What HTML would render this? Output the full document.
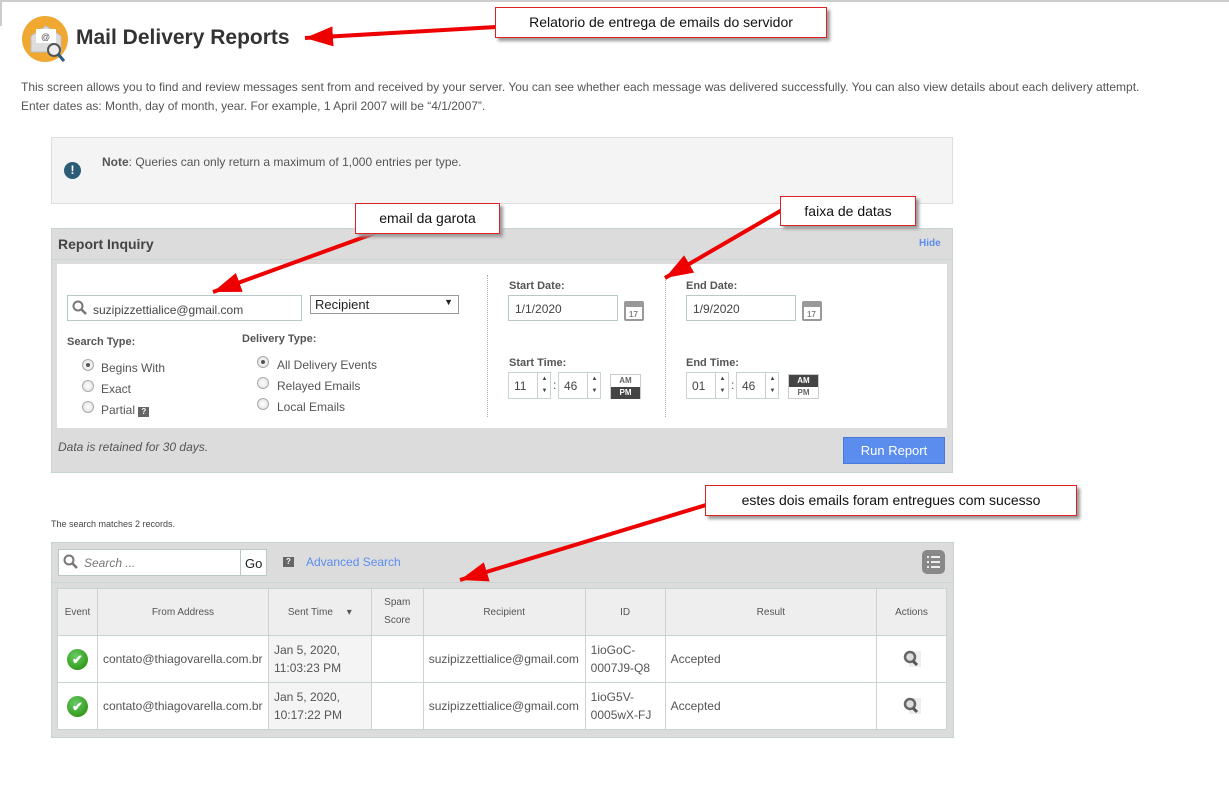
<!DOCTYPE html>
<html><head><meta charset="utf-8"><style>
*{box-sizing:border-box;margin:0;padding:0}
body{width:1229px;height:806px;background:#fff;font-family:"Liberation Sans",Arial,sans-serif;position:relative;overflow:hidden;color:#333}
.a{position:absolute}
.t12{font-size:12px;color:#555}
.lbl{font-size:11px;font-weight:bold;color:#555}
.inp{position:absolute;background:#fff;border:1px solid #b8c8c8;font-size:12px;color:#444}
.radio{position:absolute;width:12px;height:12px;border-radius:50%;border:1px solid #aaa;background:radial-gradient(#fff,#ddd)}
.radio.on::after{content:"";position:absolute;left:3px;top:3px;width:4px;height:4px;border-radius:50%;background:#555}
.rl{position:absolute;font-size:12px;color:#555}
.ann{position:absolute;background:#fff;border:1px solid #d22;box-shadow:3px 3px 3px #999;font-size:14px;color:#111;text-align:center}
table{border-collapse:collapse;position:absolute;left:57px;top:588px;width:890px;font-size:12px}
td,th{border:1px solid #c8d4d4;color:#555}
th{background:#eee;font-size:10px;font-weight:normal;height:47px}
td{height:47px;background:#fff;padding:0 5px}
.spin{position:absolute;border:1px solid #c8d4d4;background:#fff;font-size:12px;color:#444}
.ampm{position:absolute;width:31px;height:25px;border:1px solid #ccc;font-size:8px;font-weight:bold;text-align:center;line-height:12px}
</style></head><body>
<div class="a" style="left:0;top:0;width:1229px;height:2px;background:#ccc"></div>
<div class="a" style="left:0;top:0;width:2px;height:26px;background:#ccc"></div>
<div class="a" style="left:22px;top:16px;width:46px;height:46px;border-radius:50%;background:#f0a830"></div>
<svg class="a" style="left:22px;top:16px" width="50" height="50"><path d="M9 20 L24 10 L39 20 L39 36 L9 36Z" fill="#ddd" stroke="#bbb"/><rect x="14" y="13" width="20" height="14" fill="#fff"/><text x="19" y="24" font-size="9" fill="#555" font-family="Liberation Sans">@</text><circle cx="32" cy="34" r="6" fill="#eee" stroke="#555" stroke-width="2"/><line x1="36" y1="38" x2="42" y2="45" stroke="#2a5a80" stroke-width="3"/></svg>
<div class="a" style="left:76px;top:26px;font-size:21px;font-weight:bold;color:#333">Mail Delivery Reports</div>
<div class="a t12" style="left:21px;top:80px">This screen allows you to find and review messages sent from and received by your server. You can see whether each message was delivered successfully. You can also view details about each delivery attempt.</div>
<div class="a t12" style="left:21px;top:99px">Enter dates as: Month, day of month, year. For example, 1 April 2007 will be “4/1/2007”.</div>

<div class="a" style="left:51px;top:137px;width:902px;height:67px;background:#f4f4f4;border:1px solid #ddd"></div>
<div class="a" style="left:64px;top:162px;width:17px;height:17px;border-radius:50%;background:#2c5d78;color:#fff;font-size:12px;font-weight:bold;text-align:center;line-height:17px">!</div>
<div class="a t12" style="left:102px;top:155px"><b>Note</b>: Queries can only return a maximum of 1,000 entries per type.</div>

<div class="a" style="left:51px;top:228px;width:902px;height:245px;background:#dcdcdc;border:1px solid #c8d4d4"></div>
<div class="a" style="left:52px;top:259px;width:900px;height:1px;background:#c8d4d4"></div>
<div class="a" style="left:58px;top:236px;font-size:14px;font-weight:bold;color:#444">Report Inquiry</div>
<div class="a" style="left:919px;top:238px;font-size:10px;font-weight:bold;color:#5b8def">Hide</div>
<div class="a" style="left:57px;top:264px;width:890px;height:164px;background:#fff"></div>
<div class="inp" style="left:67px;top:295px;width:235px;height:26px;padding:7px 0 0 25px">suzipizzettialice@gmail.com</div>
<svg class="a" style="left:72px;top:300px" width="16" height="16"><circle cx="6" cy="6" r="4.5" fill="none" stroke="#777" stroke-width="2"/><line x1="9" y1="9" x2="14" y2="14" stroke="#777" stroke-width="2.5"/></svg>
<div class="a" style="left:310px;top:295px;width:149px;height:19px;border:1px solid #999;font-size:13px;padding:1px 4px;color:#222">Recipient<span style="position:absolute;right:5px;top:1px;font-size:9px">▼</span></div>
<div class="a lbl" style="left:67px;top:336px">Search Type:</div>
<div class="a lbl" style="left:242px;top:333px">Delivery Type:</div>
<div class="radio on" style="left:82px;top:359px"></div><div class="rl" style="left:101px;top:361px">Begins With</div>
<div class="radio" style="left:82px;top:380px"></div><div class="rl" style="left:101px;top:382px">Exact</div>
<div class="radio" style="left:82px;top:401px"></div><div class="rl" style="left:101px;top:403px">Partial <span style="display:inline-block;width:11px;height:10px;background:#666;color:#fff;font-size:8px;line-height:10px;text-align:center;font-weight:bold">?</span></div>
<div class="radio on" style="left:257px;top:356px"></div><div class="rl" style="left:277px;top:358px">All Delivery Events</div>
<div class="radio" style="left:257px;top:377px"></div><div class="rl" style="left:277px;top:379px">Relayed Emails</div>
<div class="radio" style="left:257px;top:398px"></div><div class="rl" style="left:277px;top:400px">Local Emails</div>
<div class="a" style="left:487px;top:275px;height:142px;border-left:1px dotted #aaa"></div>
<div class="a" style="left:665px;top:275px;height:142px;border-left:1px dotted #aaa"></div>

<div class="a lbl" style="left:509px;top:280px">Start Date:</div>
<div class="inp" style="left:508px;top:295px;width:110px;height:26px;padding:6px 6px">1/1/2020</div>
<div class="a lbl" style="left:686px;top:280px">End Date:</div>
<div class="inp" style="left:686px;top:295px;width:110px;height:26px;padding:6px 6px">1/9/2020</div>
<svg class="a" style="left:623px;top:298px" width="22" height="24"><rect x="1" y="3" width="20" height="20" rx="2" fill="#999"/><rect x="3" y="9" width="16" height="12" fill="#fff"/><text x="6" y="19" font-size="8" font-weight="bold" fill="#888" font-family="Liberation Sans">17</text></svg>
<svg class="a" style="left:801px;top:298px" width="22" height="24"><rect x="1" y="3" width="20" height="20" rx="2" fill="#999"/><rect x="3" y="9" width="16" height="12" fill="#fff"/><text x="6" y="19" font-size="8" font-weight="bold" fill="#888" font-family="Liberation Sans">17</text></svg>

<div class="a lbl" style="left:509px;top:357px">Start Time:</div>
<div class="a lbl" style="left:686px;top:357px">End Time:</div>
<div class="spin" style="left:508px;top:372px;width:43px;height:27px;padding:6px 5px">11<span style="position:absolute;left:28px;top:0;width:14px;height:25px;border-left:1px solid #ccc;font-size:6px;line-height:12px;text-align:center">▲<br>▼</span></div>
<div class="a" style="left:553px;top:378px;font-size:12px;color:#555">:</div>
<div class="spin" style="left:558px;top:372px;width:43px;height:27px;padding:6px 5px">46<span style="position:absolute;left:28px;top:0;width:14px;height:25px;border-left:1px solid #ccc;font-size:6px;line-height:12px;text-align:center">▲<br>▼</span></div>
<div class="ampm" style="left:610px;top:374px"><div style="color:#666">AM</div><div style="background:#444;color:#fff">PM</div></div>
<div class="spin" style="left:686px;top:372px;width:43px;height:27px;padding:6px 5px">01<span style="position:absolute;left:28px;top:0;width:14px;height:25px;border-left:1px solid #ccc;font-size:6px;line-height:12px;text-align:center">▲<br>▼</span></div>
<div class="a" style="left:731px;top:378px;font-size:12px;color:#555">:</div>
<div class="spin" style="left:736px;top:372px;width:43px;height:27px;padding:6px 5px">46<span style="position:absolute;left:28px;top:0;width:14px;height:25px;border-left:1px solid #ccc;font-size:6px;line-height:12px;text-align:center">▲<br>▼</span></div>
<div class="ampm" style="left:788px;top:374px"><div style="background:#444;color:#fff">AM</div><div style="color:#666">PM</div></div>

<div class="a" style="left:58px;top:440px;font-size:12px;font-style:italic;color:#555">Data is retained for 30 days.</div>
<div class="a" style="left:843px;top:437px;width:102px;height:27px;background:#5b8def;border:1px solid #4a7ad8;color:#fff;font-size:13px;text-align:center;line-height:25px">Run Report</div>

<div class="a" style="left:51px;top:519px;font-size:9px;color:#444">The search matches 2 records.</div>
<div class="a" style="left:51px;top:542px;width:903px;height:196px;background:#dcdcdc;border:1px solid #c8d4d4"></div>
<div class="a" style="left:52px;top:582px;width:901px;height:1px;background:#c8d4d4"></div>
<div class="inp" style="left:58px;top:549px;width:183px;height:27px;padding:6px 0 0 25px;font-style:italic;color:#777">Search ...</div>
<svg class="a" style="left:63px;top:554px" width="16" height="16"><circle cx="6" cy="6" r="4.5" fill="none" stroke="#777" stroke-width="2"/><line x1="9" y1="9" x2="14" y2="14" stroke="#777" stroke-width="2.5"/></svg>
<div class="inp" style="left:240px;top:549px;width:27px;height:27px;padding:6px 0 0 4px;font-size:13px;color:#222">Go</div>
<div class="a" style="left:283px;top:557px;width:11px;height:10px;background:#666;color:#fff;font-size:8px;line-height:10px;text-align:center;font-weight:bold">?</div>
<div class="a" style="left:306px;top:555px;font-size:12px;color:#5b8def">Advanced Search</div>
<div class="a" style="left:922px;top:550px;width:23px;height:24px;border-radius:5px;background:#888"><svg width="23" height="24"><g stroke="#eee" stroke-width="2"><line x1="5" y1="7" x2="7" y2="7"/><line x1="9" y1="7" x2="18" y2="7"/><line x1="5" y1="12" x2="7" y2="12"/><line x1="9" y1="12" x2="18" y2="12"/><line x1="5" y1="17" x2="7" y2="17"/><line x1="9" y1="17" x2="18" y2="17"/></g></svg></div>

<table>
<tr><th style="width:40px">Event</th><th style="width:171px">From Address</th><th style="width:103px">Sent Time &nbsp; &nbsp; ▾</th><th style="width:52px;line-height:18px">Spam<br>Score</th><th style="width:162px">Recipient</th><th style="width:80px">ID</th><th style="width:212px">Result</th><th style="width:70px">Actions</th></tr>
<tr><td style="text-align:center;padding:0"><span style="display:inline-block;width:21px;height:21px;border-radius:50%;background:radial-gradient(circle at 40% 35%,#6c6,#280);color:#fff;font-size:13px;line-height:21px;font-weight:bold">✔</span></td><td>contato@thiagovarella.com.br</td><td style="background:#f4f4f4;line-height:18px">Jan 5, 2020,<br>11:03:23 PM</td><td></td><td>suzipizzettialice@gmail.com</td><td style="line-height:18px">1ioGoC-<br>0007J9-Q8</td><td>Accepted</td><td style="text-align:center"><svg width="22" height="20"><rect x="8" y="3" width="12" height="16" fill="#eee"/><circle cx="9" cy="9" r="5" fill="#ddd" stroke="#666" stroke-width="2.5"/><line x1="12" y1="13" x2="16" y2="17" stroke="#555" stroke-width="3"/></svg></td></tr>
<tr><td style="text-align:center;padding:0"><span style="display:inline-block;width:21px;height:21px;border-radius:50%;background:radial-gradient(circle at 40% 35%,#6c6,#280);color:#fff;font-size:13px;line-height:21px;font-weight:bold">✔</span></td><td>contato@thiagovarella.com.br</td><td style="background:#f4f4f4;line-height:18px">Jan 5, 2020,<br>10:17:22 PM</td><td></td><td>suzipizzettialice@gmail.com</td><td style="line-height:18px">1ioG5V-<br>0005wX-FJ</td><td>Accepted</td><td style="text-align:center"><svg width="22" height="20"><rect x="8" y="3" width="12" height="16" fill="#eee"/><circle cx="9" cy="9" r="5" fill="#ddd" stroke="#666" stroke-width="2.5"/><line x1="12" y1="13" x2="16" y2="17" stroke="#555" stroke-width="3"/></svg></td></tr>
</table>

<svg class="a" style="left:0;top:0" width="1229" height="806">
<defs><marker id="h" markerWidth="7" markerHeight="5" refX="7" refY="2.5" orient="auto"><path d="M0 0 L7 2.5 L0 5Z" fill="#e00"/></marker></defs>
<g stroke="#e00" stroke-width="4" fill="none" marker-end="url(#h)">
<line x1="496" y1="27" x2="305" y2="38"/>
<line x1="378" y1="232" x2="213" y2="292"/>
<line x1="782" y1="210" x2="665" y2="278"/>
<line x1="706" y1="505" x2="460" y2="580"/>
</g></svg>
<div class="ann" style="left:495px;top:7px;width:332px;height:31px;line-height:29px">Relatorio de entrega de emails do servidor</div>
<div class="ann" style="left:355px;top:203px;width:145px;height:31px;line-height:29px">email da garota</div>
<div class="ann" style="left:780px;top:196px;width:136px;height:30px;line-height:28px">faixa de datas</div>
<div class="ann" style="left:705px;top:485px;width:372px;height:31px;line-height:29px">estes dois emails foram entregues com sucesso</div>
</body></html>
